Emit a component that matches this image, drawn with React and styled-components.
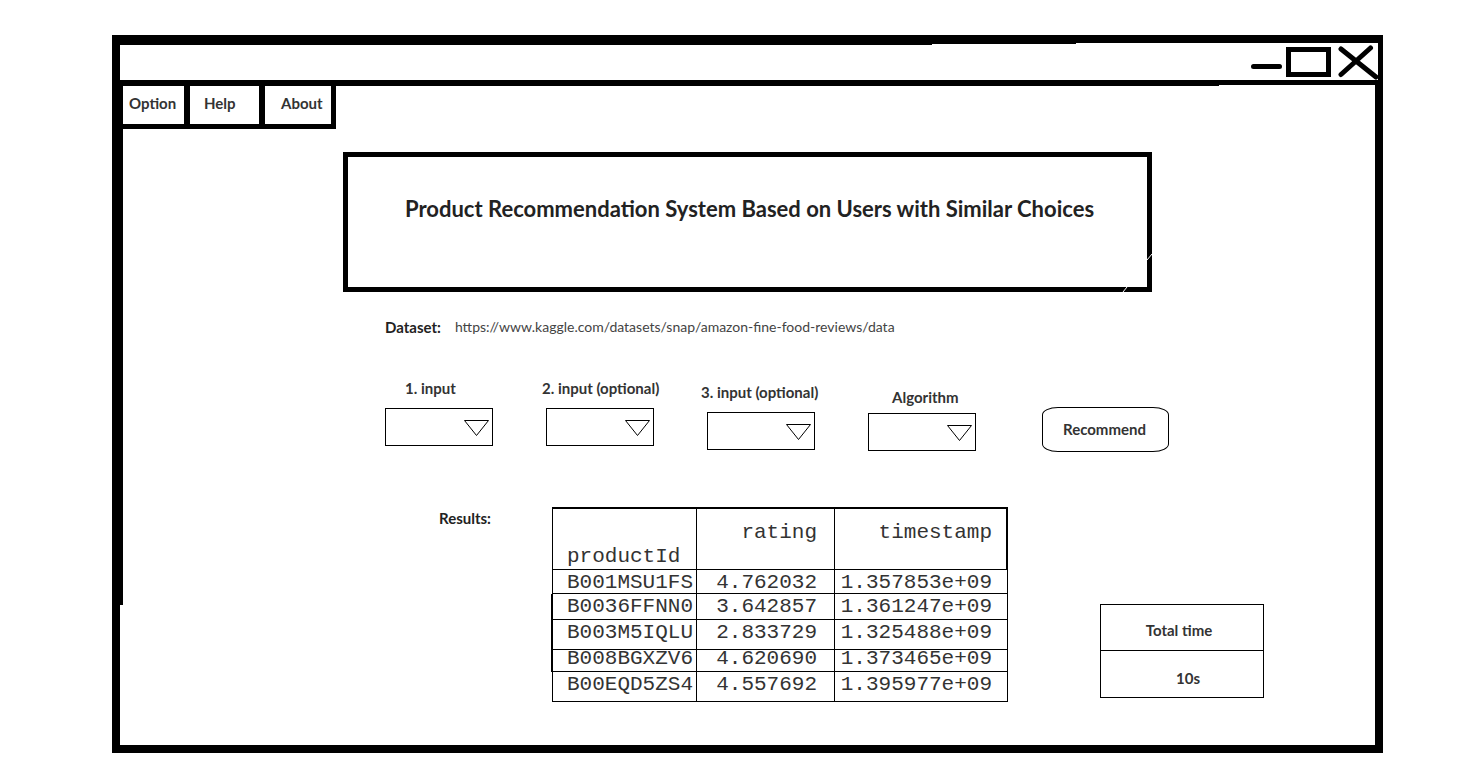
import React from "react";
import styled, { createGlobalStyle } from "styled-components";

const GlobalStyle = createGlobalStyle`
  *, *::before, *::after { box-sizing: border-box; }
  body {
    margin: 0;
    background: #fff;
    color: #222;
    font-family: Lato, "Liberation Sans", sans-serif;
    font-size: 15px;
    line-height: 20px;
  }
  button, select { font: inherit; color: inherit; }
`;

const Page = styled.div`
  padding: 35px 77px 21px 112px;
`;

const Window = styled.main`
  border: 8px solid #000;
  border-right: 0;
  min-width: 1150px;
`;

const TitleBar = styled.header`
  display: flex;
  justify-content: flex-end;
  border-right: 5px solid #000;
  border-bottom: 5px solid #000;
  /* the frame line above is heavier towards the left */
  background:
    linear-gradient(#000, #000) 0 0 / 812px 2px no-repeat,
    linear-gradient(#000, #000) 0 0 / 956px 1px no-repeat;
`;

const WindowButton = styled.button`
  display: block;
  padding: 0;
  margin-left: ${(p) => p.$gap}px;
  border: 0;
  background: none;

  svg {
    display: block;
    fill: none;
    stroke: #000;
    stroke-width: 5;
    stroke-linecap: round;
  }
`;

const Body = styled.div`
  padding-bottom: 43px;
  border-right: 8px solid #000;
  background:
    linear-gradient(#000, #000) 0 0 / 1099px 1px no-repeat,
    linear-gradient(#000, #000) 0 0 / 3px 520px no-repeat;
`;

const Menu = styled.nav`
  display: flex;
  padding: 1px 0 0 3px;
`;

const MenuButton = styled.button`
  width: ${(p) => p.$width}px;
  height: 43px;
  padding: 0 0 4px ${(p) => p.$indent}px;
  border: solid #000;
  border-width: 0 6px 5px 0;
  background: #fff;
  color: #333;
  font-weight: 700;
  text-align: left;

  &:last-child { border-right-width: 5px; }
`;

const Hero = styled.section`
  position: relative;
  width: 809px;
  height: 140px;
  margin: 23px auto 0;
  padding: 37px 0 0 57px;
  border: 5px solid #000;
`;

const Heading = styled.h1`
  margin: 0;
  font-size: 22px;
  line-height: 30px;
  font-weight: 700;
  white-space: nowrap;
`;

const Scratches = styled.svg`
  position: absolute;
  right: -5px;
  bottom: -5px;
  stroke: #fff;
`;

const Content = styled.div`
  padding-left: 265px;
`;

const DatasetRow = styled.p`
  display: flex;
  gap: 14px;
  margin: 25px 0 0;

  a {
    color: #444;
    font-size: 14px;
    text-decoration: none;
  }
`;

const Form = styled.form`
  display: flex;
  align-items: flex-start;
  gap: 53px;
  margin-top: 41px;
`;

const Field = styled.div`
  width: 108px;
  padding-top: ${(p) => p.$drop}px;
`;

const FieldLabel = styled.label`
  display: block;
  margin-left: ${(p) => p.$indent}px;
  margin-bottom: ${(p) => p.$gap}px;
  color: #333;
  font-weight: 700;
  white-space: nowrap;
`;

const SelectBox = styled.div`
  position: relative;

  select {
    display: block;
    width: 100%;
    height: 38px;
    padding: 0 32px 0 8px;
    border: 1px solid #000;
    border-radius: 0;
    background: #fff;
    appearance: none;
  }

  svg {
    position: absolute;
    top: 12px;
    right: 4px;
    fill: none;
    stroke: #000;
    pointer-events: none;
  }
`;

const RecommendButton = styled.button`
  width: 127px;
  height: 45px;
  margin: 29px 0 0 13px;
  padding: 0 2px 2px 0;
  border: 1px solid #000;
  border-radius: 16px / 8px;
  background: #fff;
  color: #333;
  font-weight: 700;
`;

const Results = styled.section`
  display: flex;
  align-items: flex-start;
  margin-top: 55px;
  padding-left: 54px;
`;

const ResultsTitle = styled.h2`
  width: 113px;
  margin: 1px 0 0;
  font-size: 15px;
  line-height: 20px;
`;

const ResultTable = styled.table`
  width: 456px;
  table-layout: fixed;
  border-collapse: separate;
  border-spacing: 0;
  border: solid #000;
  border-width: 2px 0 0 1px;
  color: #333;
  font-family: "Liberation Mono", monospace;
  font-size: 21px;
  line-height: 18px;

  th, td {
    padding: 4px 17px 0 0;
    border: solid #000;
    border-width: 0 1px 1px 0;
    font-weight: 400;
    text-align: right;
    vertical-align: top;
    white-space: nowrap;
  }
  th:first-child {
    padding-left: 14px;
    padding-right: 0;
    text-align: left;
  }
  th:last-child, td:last-child { padding-right: 15px; }

  thead th { height: 61px; padding-top: 15px; }
  thead th:first-child { padding-top: 39px; }
  thead th:last-child { border-right-width: 2px; padding-right: 14px; }
`;

const ResultRow = styled.tr`
  height: ${(p) => p.$height}px;
  box-shadow: ${(p) => (p.$heavy ? "-2px 0 #000" : "none")};

  &&& > * { ${(p) => p.$height < 24 && "padding-top: 0;"} }
`;

const TimeTable = styled.table`
  width: 164px;
  margin: 97px 0 0 92px;
  border-collapse: separate;
  border-spacing: 0;
  border: 1px solid #000;
  color: #333;

  th, td {
    height: 46px;
    padding: 4px 6px 0 0;
    font-weight: 700;
    text-align: center;
  }
  th { border-bottom: 1px solid #000; }
  td { padding: 8px 0 0 12px; }
`;

const fields = [
  { id: "input1", label: "1. input", indent: 20, drop: 0, gap: 10 },
  { id: "input2", label: "2. input (optional)", indent: -4, drop: 0, gap: 10 },
  { id: "input3", label: "3. input (optional)", indent: -6, drop: 4, gap: 10 },
  { id: "algorithm", label: "Algorithm", indent: 24, drop: 9, gap: 6 },
];

const rows = [
  { id: "B001MSU1FS", rating: "4.762032", time: "1.357853e+09", height: 24 },
  { id: "B0036FFNN0", rating: "3.642857", time: "1.361247e+09", height: 26, heavy: true },
  { id: "B003M5IQLU", rating: "2.833729", time: "1.325488e+09", height: 30, heavy: true },
  { id: "B008BGXZV6", rating: "4.620690", time: "1.373465e+09", height: 22, heavy: true },
  { id: "B00EQD5ZS4", rating: "4.557692", time: "1.395977e+09", height: 30 },
];

const datasetUrl = "https://www.kaggle.com/datasets/snap/amazon-fine-food-reviews/data";

export default function App() {
  return (
    <Page>
      <GlobalStyle />
      <Window>
        <TitleBar>
          <WindowButton type="button" aria-label="Minimize" $gap={0}>
            <svg width="31" height="37"><path d="M2.5 23.5H28.5" /></svg>
          </WindowButton>
          <WindowButton type="button" aria-label="Maximize" $gap={4}>
            <svg width="45" height="37"><rect x="2.5" y="6.5" width="40" height="25" /></svg>
          </WindowButton>
          <WindowButton type="button" aria-label="Close" $gap={7}>
            <svg width="40" height="37"><path d="M3 6 38 34M32.500 5 3 31.500" /></svg>
          </WindowButton>
        </TitleBar>
        <Body>
          <Menu>
            <MenuButton type="button" $width={67} $indent={6}>Option</MenuButton>
            <MenuButton type="button" $width={75} $indent={14}>Help</MenuButton>
            <MenuButton type="button" $width={71} $indent={16}>About</MenuButton>
          </Menu>
          <Hero>
            <Heading>Product Recommendation System Based on Users with Similar Choices</Heading>
            <Scratches width="30" height="39" aria-hidden="true">
              <path d="M25 7 30 1M1 39 5 34" />
            </Scratches>
          </Hero>
          <Content>
            <DatasetRow>
              <strong>Dataset:</strong>
              <a href={datasetUrl}>{datasetUrl}</a>
            </DatasetRow>
            <Form onSubmit={(e) => e.preventDefault()}>
              {fields.map((f) => (
                <Field key={f.id} $drop={f.drop}>
                  <FieldLabel htmlFor={f.id} $indent={f.indent} $gap={f.gap}>{f.label}</FieldLabel>
                  <SelectBox>
                    <select id={f.id} />
                    <svg width="25" height="16" aria-hidden="true">
                      <path d="M0.500 0.500H24.500L12.500 15.500Z" />
                    </svg>
                  </SelectBox>
                </Field>
              ))}
              <RecommendButton type="submit">Recommend</RecommendButton>
            </Form>
            <Results>
              <ResultsTitle>Results:</ResultsTitle>
              <ResultTable>
                <colgroup>
                  <col style={{ width: 144 }} />
                  <col style={{ width: 138 }} />
                  <col />
                </colgroup>
                <thead>
                  <tr>
                    <th scope="col">productId</th>
                    <th scope="col">rating</th>
                    <th scope="col">timestamp</th>
                  </tr>
                </thead>
                <tbody>
                  {rows.map((r) => (
                    <ResultRow key={r.id} $height={r.height} $heavy={r.heavy}>
                      <th scope="row">{r.id}</th>
                      <td>{r.rating}</td>
                      <td>{r.time}</td>
                    </ResultRow>
                  ))}
                </tbody>
              </ResultTable>
              <TimeTable>
                <tbody>
                  <tr><th scope="col">Total time</th></tr>
                  <tr><td>10s</td></tr>
                </tbody>
              </TimeTable>
            </Results>
          </Content>
        </Body>
      </Window>
    </Page>
  );
}
